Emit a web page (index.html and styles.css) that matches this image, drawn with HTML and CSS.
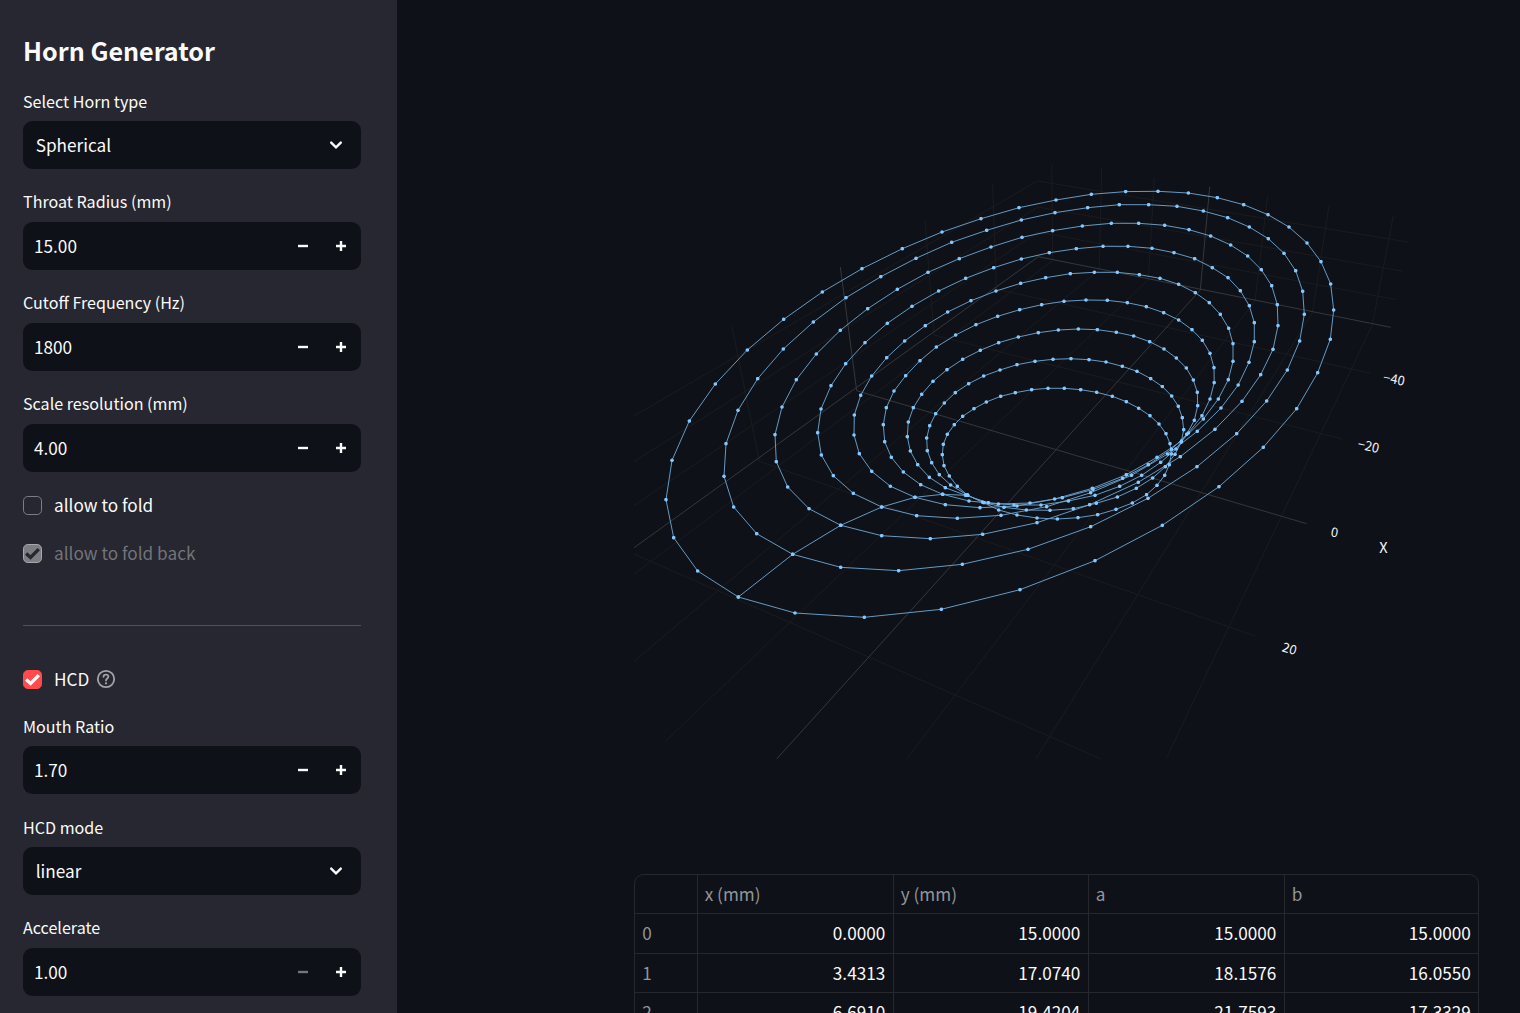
FILE: index.html
```html
<!DOCTYPE html>
<html lang="en">
<head>
<meta charset="utf-8">
<title>Horn Generator</title>
<link rel="stylesheet" href="styles.css">
</head>
<body>
<svg class="defs" width="0" height="0" aria-hidden="true">
  <symbol id="chevron" viewBox="0 0 24 24"><path d="M4.800 8.400 12 15.600l7.200-7.200" fill="none" stroke="currentColor" stroke-width="3.600" stroke-linecap="round" stroke-linejoin="miter"/></symbol>
  <symbol id="minus" viewBox="0 0 10 10"><path d="M0 3.800h10v2.400H0z" fill="currentColor"/></symbol>
  <symbol id="plus" viewBox="0 0 10 10"><path d="M3.800 0h2.400v3.800H10v2.400H6.200V10H3.800V6.200H0V3.800h3.800z" fill="currentColor"/></symbol>
  <symbol id="check" viewBox="0 0 20 20"><path d="M2.500 10l5.200 4.700 9.700-9.900" fill="none" stroke="currentColor" stroke-width="3.900"/></symbol>
  <symbol id="help" viewBox="0 0 20 20"><g fill="none" stroke="currentColor" stroke-width="1.800" stroke-linecap="round"><circle cx="10" cy="10" r="8.200"/><path d="M7.500 7.800C7.600 4.800 12.500 4.900 12.400 7.800 12.300 9.600 10 9.600 10 11.500"/></g><circle cx="10" cy="14.300" r="1.150" fill="currentColor"/></symbol>
</svg>
<div class="app">
  <aside class="sidebar">
    <h2 class="title">Horn Generator</h2>
    <div class="field tight">
      <label class="label">Select Horn type</label>
      <div class="control select"><span>Spherical</span><svg class="chevron"><use href="#chevron"/></svg></div>
    </div>
    <div class="field">
      <label class="label">Throat Radius (mm)</label>
      <div class="control number"><span>15.00</span><svg class="step"><use href="#minus"/></svg><svg class="step"><use href="#plus"/></svg></div>
    </div>
    <div class="field">
      <label class="label">Cutoff Frequency (Hz)</label>
      <div class="control number"><span>1800</span><svg class="step"><use href="#minus"/></svg><svg class="step"><use href="#plus"/></svg></div>
    </div>
    <div class="field">
      <label class="label">Scale resolution (mm)</label>
      <div class="control number"><span>4.00</span><svg class="step"><use href="#minus"/></svg><svg class="step"><use href="#plus"/></svg></div>
    </div>
    <div class="check-row"><span class="box"></span><span>allow to fold</span></div>
    <div class="check-row disabled"><span class="box"><svg class="tick"><use href="#check"/></svg></span><span>allow to fold back</span></div>
    <hr class="divider">
    <div class="check-row checked"><span class="box"><svg class="tick"><use href="#check"/></svg></span><span>HCD</span><svg class="help"><use href="#help"/></svg></div>
    <div class="field tight">
      <label class="label">Mouth Ratio</label>
      <div class="control number"><span>1.70</span><svg class="step"><use href="#minus"/></svg><svg class="step"><use href="#plus"/></svg></div>
    </div>
    <div class="field tight">
      <label class="label">HCD mode</label>
      <div class="control select"><span>linear</span><svg class="chevron"><use href="#chevron"/></svg></div>
    </div>
    <div class="field">
      <label class="label">Accelerate</label>
      <div class="control number"><span>1.00</span><svg class="step off"><use href="#minus"/></svg><svg class="step"><use href="#plus"/></svg></div>
    </div>
  </aside>
  <main class="main">
    <svg class="plot" viewBox="634 0 845 874" width="845" height="874">
      <defs>
        <marker id="dot" viewBox="-2 -2 4 4" markerWidth="4" markerHeight="4" markerUnits="userSpaceOnUse"><circle r="1.800" class="dot"/></marker>
      </defs>
      <path class="grid" d="M634 416 1037.300 181 1408 242M634 461.500 1038 207 1403 271.300M634 505.500 1038.200 232 1396.700 299.700
        M1051.700 165 1052.700 260.700 634 574M1101.700 168 1099.300 269.300 634 661.300M1154.300 178.300 1148.300 279.700 665.700 741M1267.700 195.700 1255 301 906.700 759M1329 205.700 1312.300 313 1035.700 759M1393.300 216 1372.300 325 1166 759
        M732 326.700 759.300 461.300 1255 636M925 220.700 934 335 1342.300 439M992.700 184 996.300 289 1370.700 373.300M634 554 1101 759"/>
      <path class="zero" d="M634 547.700 1038.300 256.700 1390.700 327.300M1209.700 186.700 1200.300 290 776.700 759M840.300 267 856.700 390.700 1306.700 523.700"/>
      <polyline class="horn" points="967.300,495 957.300,486.300 949.300,476 944,465.700 942.300,454.700 943.300,444.300 947.300,434.300 954.300,424.700 962.700,416.300 974,408.700 986.300,402 1000.700,396.300 1015.300,392.700 1031.700,389.700 1048,388.300 1064.300,388.300 1080.700,389.700 1096.700,392.300 1112.300,396.300 1126.300,401.700 1138.700,408.200 1150,415.700 1159,424 1166,433.700 1170,443.700 1171.300,454 1169.300,464.700 1164.700,475.300 1157,485.300 1146.500,494.700 1132.300,503 1116,509.300 1097.700,514.700 1078,517.700 1057.300,519 1037,518 1017,515 998.700,510 982.700,502.300 967.300,495
        967.700,495.300 950.700,485 939.300,474.700 931.700,462.700 927.300,450.700 926.700,438 929.700,425.700 935.700,413.700 944.300,403 955.300,392.700 968.700,383.700 983.700,376 1000,370 1017,364.700 1035,361.300 1053,359.300 1071,358.700 1089,359.700 1106,362 1122.300,366.300 1137,371.300 1150.700,378.600 1162.300,386.500 1171.700,396 1178.300,406.300 1182.300,417.700 1183.700,429.700 1181.300,442 1175,454.300 1165.300,466.700 1152.700,478 1136.300,488.300 1117.300,497 1096.300,503.300 1073.300,508.700 1050,510.300 1026.300,510 1004,507.300 984,502.700 967.700,495.300
        965.700,495.300 945.300,487.700 929.300,477.300 917.700,464.700 910.300,451 907.300,436.700 908.300,422 913.300,407.700 921.700,394.300 933,381.300 947,369.700 962.700,359.300 980.300,350.300 998.700,342.700 1018.300,337 1038.300,332.700 1058.300,330 1078.300,329 1097.300,329.700 1116.300,332.300 1133.700,336 1149.700,341.700 1164,349 1176.300,358 1186.300,368 1193.300,380 1197.300,392.300 1197.700,405.700 1194.300,420.300 1186.700,434.300 1176,449 1160.700,462.300 1141.700,475.300 1119.700,486.300 1095,495.300 1068.300,501 1041,505 1014,505 988.300,502.700 965.700,495.300
        942.700,494.300 920.700,484.700 903.300,472 891.300,457.300 884.700,441.700 883.300,424.700 886.300,407.700 894,391 905.700,375.700 920,360.700 936.300,347 955.700,335 976,324.700 997.700,316.300 1019.700,309.700 1041.700,304.700 1064,301.300 1086,300 1107.300,300.300 1127.300,302.700 1146.300,306.700 1163.700,312.700 1178.700,320 1192,329.700 1202.300,340.300 1210,353.300 1214,367.700 1214.200,382.700 1210,399 1202,415.700 1188.300,433 1171.500,449.300 1148.300,464.700 1122.700,478.300 1093,489.500 1062.300,497.700 1030,503 998.300,504 969,501 942.700,494.300
        915,497.300 890.300,486.200 871.700,471.300 859.300,453.700 854,435 854.300,415 860.700,395.300 871.700,376 886.700,357.700 904.700,341 925.300,325.700 947.700,312 971,300.700 996,291 1020.700,283.300 1045.700,277.700 1070.300,273.700 1094.300,272.300 1117.300,272.300 1139.300,274.700 1160,278.300 1178.700,284.300 1195.300,292.700 1209.300,302.700 1220.300,314.300 1228.700,328.300 1233,343.700 1233,361.300 1228.300,379.700 1218.300,399 1203.300,419 1181.500,441 1157,457.300 1126.300,474.700 1092.300,488.300 1054.700,499 1017,506 980,507.700 945.300,504.700 915,497.300
        881.700,507 853.300,493.300 833.300,475.700 821.300,455 817.700,432.700 821,409 831,385.700 845.700,363.700 865,342.700 887.300,323.300 912,306.300 938.700,291 965.700,278.300 993.700,267.700 1021.300,259 1049.300,252.700 1076.300,248.700 1103,246.300 1128,246.300 1152,248.300 1174,252.700 1194.700,258.700 1212.300,267.700 1228,277.700 1240.300,290.700 1249.300,305.700 1254.300,322.700 1254.300,341.700 1249,362.300 1238.200,385 1221,408 1197.300,431.300 1167.700,454 1131.500,475.300 1090.700,492.700 1046.700,506.700 1001,515.300 957.300,518.300 916.700,515.700 881.700,507
        840.700,525.300 809,508.700 787.700,487 776.300,461.700 775,434.700 782,407 796.300,379.700 816.300,354 840.300,330.300 867.700,308.700 897.300,289.300 928,272.300 959.300,258.700 991,247 1022,237.300 1052.700,230.700 1082.300,226 1111.300,223.300 1138.700,223.300 1164.700,225.300 1189,229.700 1210.700,236 1230.700,245 1247.700,256 1261.300,269.700 1271.700,285.700 1277.300,304.700 1278,325.700 1273,349.300 1260.700,374.700 1242,401.300 1215,429.300 1180.300,456.700 1138.300,482.300 1089.700,504.700 1037,522.700 982.700,534.300 930.300,538.700 881.700,535.700 840.700,525.300
        792.700,554.300 756.700,533.700 733.700,507 724,476.300 726,443.700 738,410.300 757.700,378.700 783.300,349 813.300,322 846,297.700 880.800,276.700 916,258.300 951.700,242.300 986.700,230.300 1021.300,220 1055,212.700 1087.700,207.700 1119.300,204.700 1148.700,204.700 1177,206.300 1203.300,211 1227.700,217.700 1249.300,227 1268.300,238.700 1284,253.300 1295.700,270.700 1302.700,291.300 1304.300,314.300 1299.700,341 1287.300,370 1266.700,401 1236.700,433.700 1197,466.700 1148,498.300 1090.700,526.700 1028,549.300 962.300,564.300 898.700,570.700 840.700,567.300 792.700,554.300
        738.300,597 697.700,571 673.700,537.700 666,499.700 672,460.300 689.300,421 715.300,384 747.300,350 783.700,319.300 822.300,292 862,268.700 902.300,248.700 942,232 981,218.700 1019,207.700 1056,200 1091.300,194.300 1125.700,191.600 1158,191.300 1188.300,193 1217.300,197.700 1243.700,204.700 1268,214.700 1289,227 1307,243 1321,261.700 1330.700,284 1333.700,310 1330.300,339.300 1317.700,372.700 1296.700,408.700 1263.300,447.300 1219,486.700 1162.300,525.300 1095,560.700 1020,589.700 941.300,609.300 864.300,617.300 795,613 738.300,597"/>
      <g class="ticks">
        <text transform="translate(1394 379.300) rotate(11)" y="4.500">−40</text>
        <text transform="translate(1368.500 446.200) rotate(13)" y="4.500">−20</text>
        <text transform="translate(1334.500 532.500) rotate(10)" y="4.500">0</text>
        <text transform="translate(1289.500 648.700) rotate(17)" y="4.500">20</text>
        <text class="axis" x="1383.500" y="553">X</text>
      </g>
    </svg>
    <div class="table">
      <div class="row head"><span></span><span>x (mm)</span><span>y (mm)</span><span>a</span><span>b</span></div>
      <div class="row"><span>0</span><span>0.0000</span><span>15.0000</span><span>15.0000</span><span>15.0000</span></div>
      <div class="row"><span>1</span><span>3.4313</span><span>17.0740</span><span>18.1576</span><span>16.0550</span></div>
      <div class="row"><span>2</span><span>6.6910</span><span>19.4204</span><span>21.7593</span><span>17.3329</span></div>
    </div>
  </main>
</div>
</body>
</html>
```
FILE: styles.css
```css
* { box-sizing: border-box; }
html, body { margin: 0; height: 100%; overflow: hidden; background: #0e1117; }
body { font-family: "Noto Sans CJK SC", "Noto Sans", sans-serif; font-size: 17.2px; color: #fafafa; }
.defs { display: block; }
.app { display: flex; height: 1013px; }

.sidebar { width: 397px; flex: none; padding: 32px 36px 0 23px; background: #262730; overflow: hidden; }
.title { margin: 0 0 21px; font-size: 25.1px; line-height: 36px; font-weight: 700; }
.field { display: flex; flex-direction: column; justify-content: flex-end; gap: 9px; height: 80px; margin-bottom: 21px; }
.tight { gap: 8px; }
.label { font-size: 16.100px; line-height: 24px; }
.control { display: flex; flex: none; align-items: center; height: 48px; border-radius: 9.600px; background: #0e1117; line-height: 24px; }
.control span { flex: 1; }
.select { padding: 0 13px 0 12.700px; }
.number { padding: 0 15px 0 11px; gap: 28px; }
.chevron { width: 24px; height: 24px; padding: 4px; }
.step { width: 10px; height: 10px; }
.off { color: #737680; }

.check-row { display: flex; align-items: center; height: 24px; margin-bottom: 24px; line-height: 24px; }
.box { display: flex; width: 19px; height: 19px; margin-right: 12px; border: 1px solid #7d7d84; border-radius: 4.800px; }
.tick { width: 17px; height: 17px; }
.disabled { color: #73747a; }
.disabled .box { background: #7d7d83; border-color: #a8a8ac; color: #262730; }
.checked { margin-bottom: 23px; }
.checked .box { background: #ff4b4b; border-color: #ff4b4b; color: #fff; }
.help { width: 20px; height: 20px; margin-left: 6.500px; color: #a3a4a8; }
.divider { height: 1px; margin: 60px 0 41px; border: 0; background: #505159; }

.main { flex: 1; padding-left: 237px; }
.plot { display: block; }
.grid, .zero, .horn { fill: none; stroke-width: 1; }
.grid { stroke: #1b1c1e; }
.zero { stroke: #35373a; }
.horn { stroke: #69a1cd; stroke-width: .95; marker-start: url(#dot); marker-mid: url(#dot); marker-end: url(#dot); }
.dot { fill: #83c9ff; }
.ticks { fill: #f2f5fa; font-size: 12.900px; text-anchor: middle; }
.axis { font-size: 14.600px; }

.table { width: 845px; border: 1px solid #26282d; border-radius: 9.600px 9.600px 0 0; }
.row { display: grid; grid-template-columns: 62.500px 196px 195px 196px 1fr; height: 39.500px; }
.head { height: 39px; }
.row span { height: 100%; padding: 0 7.200px; line-height: 38px; text-align: right; border-right: 1px solid #26282d; border-bottom: 1px solid #26282d; }
.row span:last-child { border-right: 0; }
.row span:first-child, .head span { text-align: left; color: #94959a; }
```
